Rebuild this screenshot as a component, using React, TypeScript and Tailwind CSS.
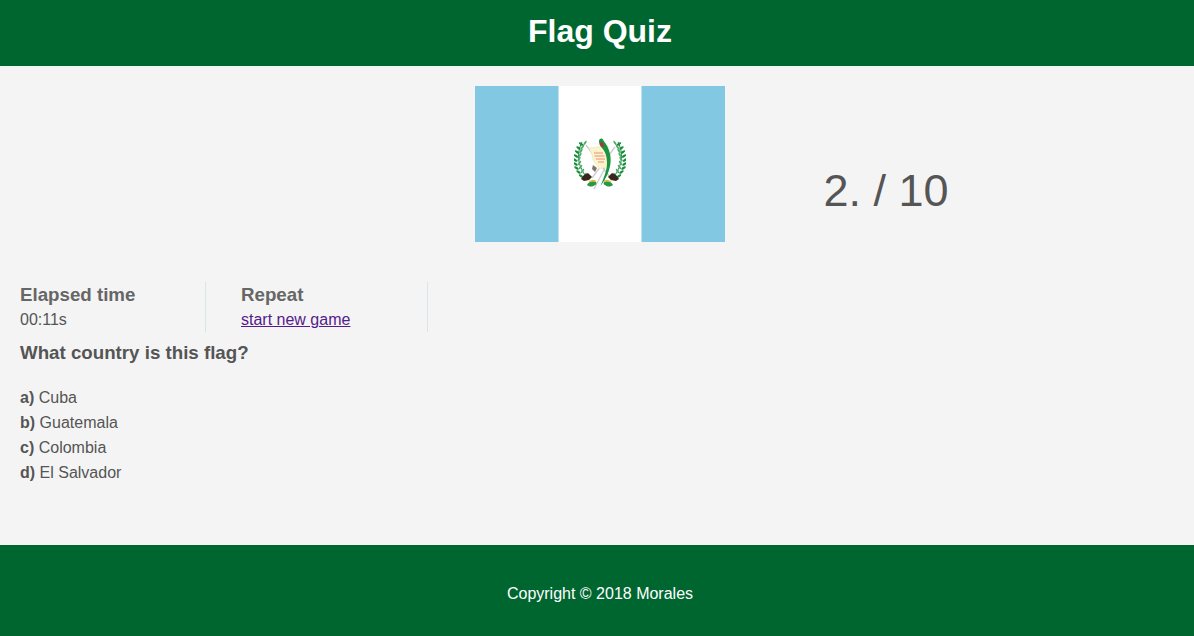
const font = { fontFamily: '"Liberation Sans", Arial, sans-serif' };

function Leaves({ flip }: { flip?: boolean }) {
  const leaves = [
    [9, 5], [6.500, 9], [5, 13], [4, 17], [3, 21], [3.500, 25], [4.500, 29], [6.500, 33], [9, 37],
  ];
  return (
    <g transform={flip ? "translate(52 0) scale(-1 1)" : undefined}>
      <path d="M8 4C3 14 2 28 15 42" fill="none" stroke="#1d7f38" strokeWidth="1" />
      {leaves.map(([x, y], i) => (
        <g key={i}>
          <ellipse cx={x - 2} cy={y + 1} rx="2.600" ry="1.100" transform={`rotate(35 ${x - 2} ${y + 1})`} fill="#159039" />
          <ellipse cx={x + 2} cy={y} rx="2.600" ry="1" transform={`rotate(-55 ${x + 2} ${y})`} fill="#4aab68" />
        </g>
      ))}
      <path d="M7 41l3-4 4-2 4 4-3 3-5 1z" fill="#3a261c" />
      <path d="M13 47c1-3 6-5 9-3 1 1 0 3-1 3-3 2-5 2-8 0z" fill="#2b9646" />
      <path d="M15 44c2-1.500 5-2 7-.5" fill="none" stroke="#e0bd2e" strokeWidth="1.400" />
    </g>
  );
}

function Emblem() {
  return (
    <svg width="52" height="52" viewBox="0 0 52 52" aria-hidden="true" className="blur-[0.3px]">
      <path d="M12 7l26 35M41 9L18 40M20 51l11-21" stroke="#cdcdcd" strokeWidth="1.300" fill="none" />
      <Leaves />
      <Leaves flip />
      <path d="M15 10l19-2c-1 5 1 12 2 20l-11 3c-1-3-4-6-6-9 0-4-2-8-4-12z" fill="#faf5cc" stroke="#ece3ae" strokeWidth=".6" />
      <path d="M20 15h9M20.500 18h10M22 21h9M24 24h6" stroke="#ee5a5a" strokeWidth=".7" />
      <path d="M25 3c0-2 2-3 3.500-2 1 1 1 2 2 3 4 5 7 13 6 21-1 8-4 15-10 23 3-8 6.500-15 6.500-23 0-7-2-12-5-15-2-2-3-4-3-7z" fill="#1a9440" />
      <path d="M26 5c1-1 2.500-1 3.500 1l-.5 3.500c-2-1-3-2.500-3-4.500z" fill="#c5283a" />
      <path d="M19 27l4 3-2 4-3-3z" fill="#7d736a" />
    </svg>
  );
}

function Flag() {
  return (
    <div className="flex h-[156px] w-[250px]">
      <div className="w-[83px] bg-[#83c8e2]" />
      <div className="flex flex-1 items-center justify-center border-x border-x-[#bfe2ef] bg-white pr-[1px]">
        <Emblem />
      </div>
      <div className="w-[83px] bg-[#83c8e2]" />
    </div>
  );
}

const answers = [
  ["a)", "Cuba"],
  ["b)", "Guatemala"],
  ["c)", "Colombia"],
  ["d)", "El Salvador"],
];

export default function App() {
  return (
    <div style={font} className="flex h-[636px] flex-col bg-[#f4f4f4] text-[#555555]">
      <header className="flex h-[66px] items-center justify-center bg-[#006630] pb-[4px] pl-[6px]">
        <h1 className="text-[32px] font-bold leading-none text-white">Flag Quiz</h1>
      </header>

      <main className="flex-1">
        <div className="flex pl-[475px] pt-5">
          <Flag />
          <div className="flex h-[156px] w-[322px] items-center justify-center pt-[52px] text-[45px] leading-none">
            2. / 10
          </div>
        </div>

        <div className="ml-5 mt-10 flex">
          <div className="h-[50px] w-[186px] border-r border-r-[#d8e6ec]">
            <div className="text-[18.72px] font-bold leading-[26px] text-[#666666]">Elapsed time</div>
            <div className="text-base leading-[24px]">00:11s</div>
          </div>
          <div className="h-[50px] w-[222px] border-r border-r-[#d8e6ec] pl-[35px]">
            <div className="text-[18.72px] font-bold leading-[26px] text-[#666666]">Repeat</div>
            <a href="#" className="text-base leading-[24px] text-[#551a8b] underline">start new game</a>
          </div>
        </div>

        <h2 className="ml-5 mt-[8px] text-[18.72px] font-bold leading-[26px]">What country is this flag?</h2>

        <ul className="ml-5 mt-[19px]">
          {answers.map(([k, v]) => (
            <li key={k} className="text-base leading-[25px]">
              <b>{k}</b> {v}
            </li>
          ))}
        </ul>
      </main>

      <footer className="flex h-[91px] items-center justify-center bg-[#006630] pl-[6px] pt-[6px] text-base text-white">
        Copyright © 2018 Morales
      </footer>
    </div>
  );
}
